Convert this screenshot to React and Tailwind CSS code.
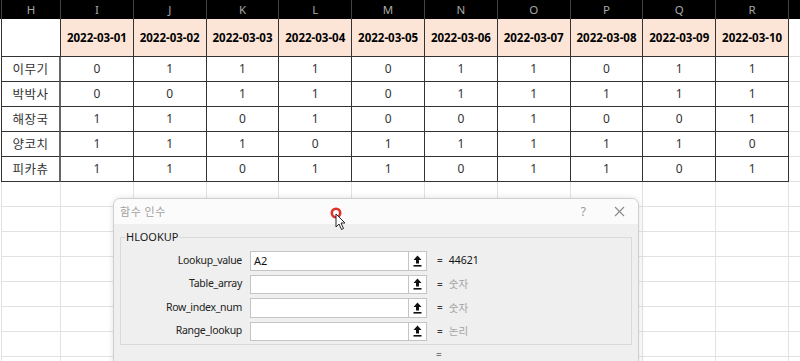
import React from "react";

const COLS = ["I", "J", "K", "L", "M", "N", "O", "P", "Q", "R"];
const DATES = COLS.map((_, i) => `2022-03-${String(i + 1).padStart(2, "0")}`);

const PEOPLE = [
  { name: "이무기", vals: [0, 1, 1, 1, 0, 1, 1, 0, 1, 1] },
  { name: "박박사", vals: [0, 0, 1, 1, 0, 1, 1, 1, 1, 1] },
  { name: "해장국", vals: [1, 1, 0, 1, 0, 0, 1, 0, 0, 1] },
  { name: "양코치", vals: [1, 1, 1, 0, 1, 1, 1, 1, 1, 0] },
  { name: "피카츄", vals: [1, 1, 0, 1, 1, 0, 1, 1, 0, 1] },
];

const ARGS = [
  { label: "Lookup_value", value: "A2", result: "44621", dim: false },
  { label: "Table_array", value: "", result: "숫자", dim: true },
  { label: "Row_index_num", value: "", result: "숫자", dim: true },
  { label: "Range_lookup", value: "", result: "논리", dim: true },
];

const GRID = "grid grid-cols-[2px_59px_repeat(10,72.8px)_1fr]";
const FONT = { fontFamily: '"Noto Sans", "Noto Sans CJK KR", sans-serif' };

function UploadIcon() {
  return (
    <svg width="9" height="12" viewBox="0 0 9 12">
      <path d="M4.5 0.5 L8.5 5 H6 V8.5 H3 V5 H0.5 Z" fill="#111" />
      <rect x="0.5" y="10" width="8" height="1.6" fill="#111" />
    </svg>
  );
}

function Cursor() {
  return (
    <svg className="absolute left-[329px] top-[206px]" width="20" height="26" viewBox="0 0 20 26">
      <circle cx="7" cy="7" r="4.2" fill="none" stroke="#e0302c" strokeWidth="2.6" />
      <path d="M7 8 V21 L10 18 L12.5 23.5 L14.5 22.5 L12 17 H16 Z" fill="#fff" stroke="#222" strokeWidth="1" strokeLinejoin="round" />
    </svg>
  );
}

export default function App() {
  const emptyRows = Array.from({ length: 8 });

  return (
    <div className="relative w-[800px] h-[361px] overflow-hidden bg-white" style={FONT}>
      {/* column headers */}
      <div className={`${GRID} h-[19px] bg-black text-[11.5px] text-[#a8a8a8]`}>
        <div className="border-r border-[#444]" />
        <div className="flex items-center justify-center border-r border-[#444]">H</div>
        {COLS.map((c) => (
          <div key={c} className="flex items-center justify-center border-r border-[#444]">{c}</div>
        ))}
        <div />
      </div>

      {/* dates */}
      <div className={`${GRID} h-[38px]`}>
        <div className="border-r border-[#333]" />
        <div className="border-r border-b border-[#333] bg-white" />
        {DATES.map((d) => (
          <div key={d} className="flex items-center justify-center border-r border-b border-[#333] bg-[#fce4d6] text-[11.5px] font-bold text-black">
            {d}
          </div>
        ))}
        <div className="border-b border-[#e2e2e2]" />
      </div>

      {/* data rows */}
      {PEOPLE.map((p) => (
        <div key={p.name} className={`${GRID} h-[25px] text-[12px] text-[#333]`}>
          <div className="border-r border-[#333]" />
          <div className="flex items-center justify-center border-r-2 border-b border-r-[#666] border-b-[#333] text-[12.5px] tracking-[0.5px]" style={{ fontFamily: '"Noto Sans CJK KR", sans-serif' }}>
            {p.name}
          </div>
          {p.vals.map((v, i) => (
            <div key={i} className="flex items-center justify-center border-r border-b border-[#333]">{v}</div>
          ))}
          <div className="border-b border-[#e2e2e2]" />
        </div>
      ))}

      {/* empty sheet */}
      {emptyRows.map((_, r) => (
        <div key={r} className={`${GRID} h-[25px]`}>
          <div className="border-r border-[#e2e2e2]" />
          <div className="border-r border-b border-[#e2e2e2]" />
          {COLS.map((c) => (
            <div key={c} className="border-r border-b border-[#e2e2e2]" />
          ))}
          <div className="border-b border-[#e2e2e2]" />
        </div>
      ))}

      {/* function arguments dialog */}
      <div className="absolute left-[113px] top-[198px] w-[526px] h-[180px] rounded-t-[7px] border border-[#cfcfcf] bg-[#efefef] shadow-[0_0_6px_rgba(0,0,0,0.12)] overflow-hidden">
        <div className="flex h-[25px] items-center bg-[#fbfbfb] pl-[6px] pr-[13px] text-[11px] text-[#a0a0a0]">
          <span className="tracking-[0.6px]" style={{ fontFamily: '"Noto Sans CJK KR", sans-serif' }}>함수 인수</span>
          <span className="ml-auto mr-[28px] text-[12px] text-[#9a9a9a]">?</span>
          <svg width="11" height="11" viewBox="0 0 11 11">
            <path d="M1 1 L10 10 M10 1 L1 10" stroke="#8a8a8a" strokeWidth="1.1" />
          </svg>
        </div>

        <div className="relative mx-[6px] mt-[13px] h-[108px] border border-[#dadada] pt-[13px]">
          <span className="absolute left-[4px] top-[-8px] bg-[#efefef] px-[1px] text-[11px] leading-[14px] text-[#1a1a1a]">
            HLOOKUP
          </span>
          <div className="flex flex-col gap-[4px]">
            {ARGS.map((a) => (
              <div key={a.label} className="flex h-[19.5px] items-center">
                <div className="w-[122px] pr-[1px] text-right text-[10.5px] tracking-[-0.3px] text-[#222]">{a.label}</div>
                <div className="ml-[7px] flex h-full w-[159px] items-center border border-[#c4c4c4] bg-white pl-[3px] text-[11px] text-[#111]">
                  {a.value}
                </div>
                <div className="flex h-full w-[18px] items-center justify-center border border-l-0 border-[#c4c4c4] bg-white">
                  <UploadIcon />
                </div>
                <span className="ml-[10px] text-[10px] text-[#333]">=</span>
                <span
                  className={`ml-[6px] text-[10.5px] ${a.dim ? "text-[#a6a6a6]" : "text-[#111]"}`}
                  style={a.dim ? { fontFamily: '"Noto Sans CJK KR", sans-serif' } : undefined}
                >
                  {a.result}
                </span>
              </div>
            ))}
          </div>
        </div>

        <div className="ml-[322px] mt-[3px] text-[10px] leading-[12px] text-[#777]">=</div>
      </div>

      <Cursor />
    </div>
  );
}
